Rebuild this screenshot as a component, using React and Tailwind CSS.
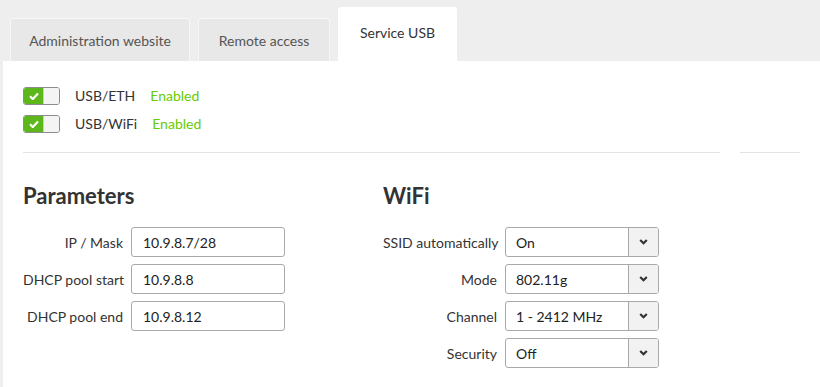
import { useState } from "react";

const font = { fontFamily: "Lato, 'Open Sans', sans-serif" };

const Toggle = ({ on = true }) => (
  <div className="flex h-[18px] w-[37px] overflow-hidden rounded-[3px] border border-[#8c8c8c]">
    <div className="flex w-[19px] items-center justify-center bg-[#5cb81a]">
      {on && (
        <svg width="10" height="8" viewBox="0 0 10 8">
          <path d="M1 4.2 L3.8 7 L9 1.5" fill="none" stroke="#fff" strokeWidth="2.2" />
        </svg>
      )}
    </div>
    <div className="flex-1 border-l border-[#cfcfcf] bg-[#f4f4f4]" />
  </div>
);

const TextRow = ({ label, value }) => (
  <div className="flex items-center">
    <div className="w-[101px] whitespace-nowrap pr-[1px] text-right text-[14px] text-[#333]">{label}</div>
    <div className="ml-[7px] flex h-[30px] w-[154px] items-center rounded-[3px] border border-[#a9a9a9] bg-white px-[11px] text-[14px] text-[#222]">
      {value}
    </div>
  </div>
);

const SelectRow = ({ label, value }) => (
  <div className="flex items-center">
    <div className="w-[114px] whitespace-nowrap text-right text-[14px] text-[#333]">{label}</div>
    <div className="ml-[8px] flex h-[30px] w-[154px] overflow-hidden rounded-[3px] border border-[#a9a9a9] bg-white text-[14px] text-[#222]">
      <div className="flex flex-1 items-center px-[10px]">{value}</div>
      <div className="flex w-[30px] items-center justify-center border-l border-[#a9a9a9] bg-[#f2f2f2]">
        <svg width="9" height="6" viewBox="0 0 9 6">
          <path d="M1.2 1 L4.5 4.3 L7.8 1" fill="none" stroke="#333" strokeWidth="2.2" />
        </svg>
      </div>
    </div>
  </div>
);

export default function App() {
  const [tab] = useState("usb");
  const tabs = [
    { id: "admin", label: "Administration website", w: "w-[180px]" },
    { id: "remote", label: "Remote access", w: "w-[132px]" },
    { id: "usb", label: "Service USB", w: "w-[119px]" },
  ];

  return (
    <div className="h-[387px] w-[820px] overflow-hidden bg-[#eeeeee]" style={font}>
      {/* tabs */}
      <div className="flex h-[61px] items-end gap-[8px] pl-[10px]">
        {tabs.map((t) =>
          t.id === tab ? (
            <div
              key={t.id}
              className={`${t.w} flex h-[54px] justify-center rounded-t-[3px] bg-white pt-[15px] text-[14px] text-[#333]`}
            >
              {t.label}
            </div>
          ) : (
            <div
              key={t.id}
              className={`${t.w} flex h-[43px] items-center justify-center rounded-t-[3px] border border-b-0 border-[#f7f7f7] bg-[#e8e8e8] text-[14px] text-[#555]`}
            >
              {t.label}
            </div>
          )
        )}
      </div>

      {/* panel */}
      <div className="ml-[3px] h-[326px] bg-white pl-[20px] pt-[26px]">
        <div className="flex flex-col gap-[10px]">
          <div className="flex h-[18px] items-center leading-[18px]">
            <Toggle />
            <span className="ml-[15px] text-[14px] text-[#333]">USB/ETH</span>
            <span className="ml-[15px] text-[14px] text-[#66cc00]">Enabled</span>
          </div>
          <div className="flex h-[18px] items-center leading-[18px]">
            <Toggle />
            <span className="ml-[15px] text-[14px] text-[#333]">USB/WiFi</span>
            <span className="ml-[15px] text-[14px] text-[#66cc00]">Enabled</span>
          </div>
        </div>

        <div className="mt-[19px] flex gap-[20px]">
          <div className="h-[1px] w-[697px] bg-[#e3e3e3]" />
          <div className="h-[1px] w-[60px] bg-[#e3e3e3]" />
        </div>

        <div className="mt-[29px] flex">
          <div className="w-[360px]">
            <h2 className="text-[22px] font-bold leading-[28px] text-[#333]">Parameters</h2>
            <div className="mt-[17px] flex flex-col gap-[7px]">
              <TextRow label="IP / Mask" value="10.9.8.7/28" />
              <TextRow label="DHCP pool start" value="10.9.8.8" />
              <TextRow label="DHCP pool end" value="10.9.8.12" />
            </div>
          </div>
          <div>
            <h2 className="text-[22px] font-bold leading-[28px] text-[#333]">WiFi</h2>
            <div className="mt-[17px] flex flex-col gap-[7px]">
              <SelectRow label="SSID automatically" value="On" />
              <SelectRow label="Mode" value="802.11g" />
              <SelectRow label="Channel" value="1 - 2412 MHz" />
              <SelectRow label="Security" value="Off" />
            </div>
          </div>
        </div>
      </div>
    </div>
  );
}
